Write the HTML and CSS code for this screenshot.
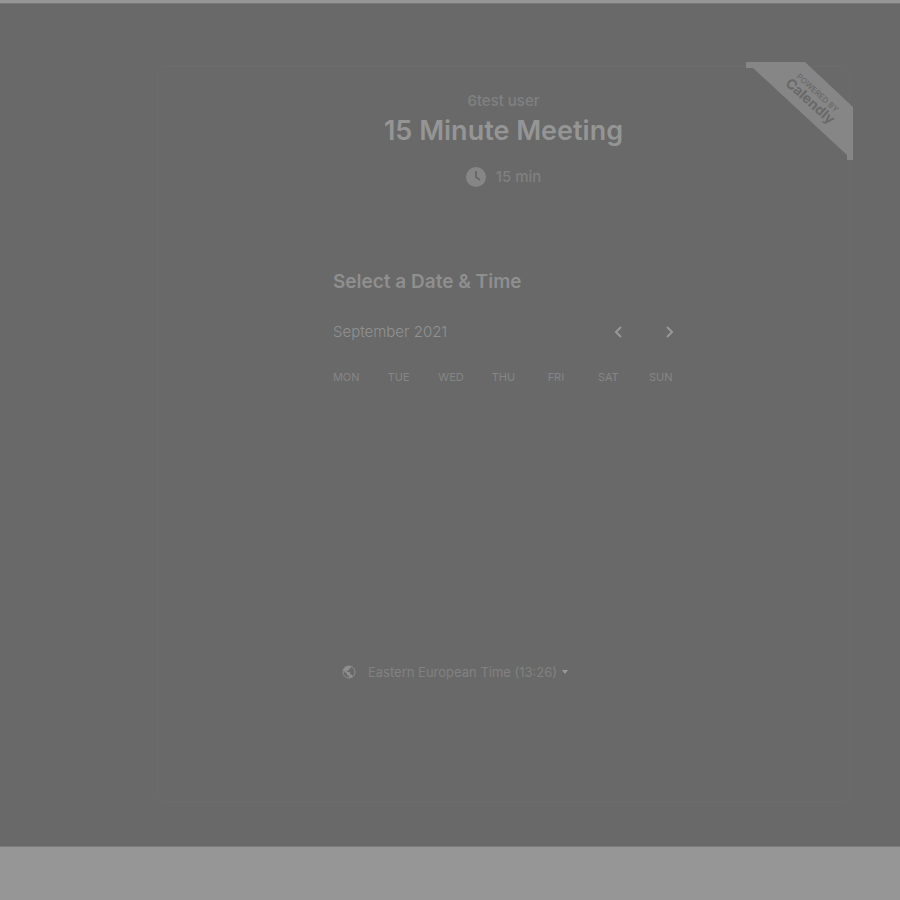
FILE: index.html
```html
<!DOCTYPE html>
<html lang="en">
<head>
<meta charset="utf-8">
<title>15 Minute Meeting</title>
<link rel="stylesheet" href="styles.css">
</head>
<body>
<main class="stage">
  <section class="card">
    <a class="ribbon" href="#">
      <svg class="ribbon-shape" viewBox="0 0 107 98" aria-hidden="true"><path d="M0 0H59L107 45V98H101V93L7 6H0Z"/></svg>
      <span class="ribbon-text"><small>POWERED BY</small><strong>Calendly</strong></span>
    </a>
    <header class="intro">
      <p class="host">6test user</p>
      <h1>15 Minute Meeting</h1>
      <p class="duration">
        <svg class="clock" viewBox="0 0 20 20" aria-hidden="true"><circle cx="10" cy="10" r="10"/><path d="M10 4V10L14 13"/></svg>
        <span>15 min</span>
      </p>
    </header>
    <div class="picker">
      <h2>Select a Date &amp; Time</h2>
      <div class="month">
        <span class="month-name">September 2021</span>
        <button type="button" aria-label="Previous month"><svg viewBox="0 0 8 12"><path d="M7 1L2 6L7 11"/></svg></button>
        <button type="button" aria-label="Next month"><svg viewBox="0 0 8 12"><path d="M1 1L6 6L1 11"/></svg></button>
      </div>
      <table class="days">
        <thead><tr><th>MON</th><th>TUE</th><th>WED</th><th>THU</th><th>FRI</th><th>SAT</th><th>SUN</th></tr></thead>
      </table>
      <button class="zone" type="button">
        <svg class="globe" viewBox="0 0 14 14" aria-hidden="true"><circle cx="7" cy="7" r="6"/><path d="M1 6L2 3L5 1L9 1L9 3L7 4L7 5L5 6L5 7L8 7L8 9L10 10L11 12L7 13L7 11L5 10L5 9L2 6Z"/></svg>
        <span>Eastern European Time (13:26)</span>
        <svg class="caret" viewBox="0 0 6 4" aria-hidden="true"><path d="M0 0H6L3 4Z"/></svg>
      </button>
    </div>
  </section>
</main>
</body>
</html>
```
FILE: styles.css
```css
* { box-sizing: border-box; }

body {
  margin: 0;
  min-height: 100vh;
  background: #969696;
  font-family: Inter, "Liberation Sans", sans-serif;
  color: #868686;
}

.stage {
  margin-top: 3px;
  padding: 62px 50px 44px 157px;
  background: #696969;
  border-top: 1px solid #777;
  border-bottom: 1px solid #7c7c7c;
}

h1, h2, p { margin: 0; }

.card {
  position: relative;
  min-height: 736px;
  padding-top: 24px;
  border: 1px solid #6c6c6c;
  border-radius: 8px;
}

.ribbon {
  position: absolute;
  top: -5px;
  right: -4px;
  width: 107px;
  height: 98px;
  color: #696969;
  text-decoration: none;
}

.ribbon-shape {
  display: block;
  width: 100%;
  fill: #868686;
}

.ribbon-text {
  position: absolute;
  top: 25px;
  left: 31px;
  width: 72px;
  text-align: center;
  transform: rotate(42deg);
}

.ribbon-text small, .ribbon-text strong { display: block; }

.ribbon-text small {
  font-size: 8px;
  font-weight: 500;
  line-height: 8px;
}

.ribbon-text strong {
  font-size: 14px;
  font-weight: 700;
  line-height: 14px;
}

.intro { text-align: center; }

.host {
  font-size: 15px;
  font-weight: 500;
  line-height: 20px;
  color: #818181;
}

h1 {
  font-size: 27px;
  font-weight: 600;
  line-height: 40px;
  color: #959595;
}

.duration {
  display: flex;
  justify-content: center;
  align-items: center;
  gap: 10px;
  margin-top: 16px;
  font-size: 15px;
  font-weight: 500;
  line-height: 20px;
  color: #808080;
}

.clock {
  width: 20px;
  height: 20px;
  fill: #868686;
}

.clock path {
  fill: none;
  stroke: #696969;
  stroke-width: 2;
}

.picker {
  max-width: 367px;
  margin: 83px auto 0;
}

h2 {
  padding-left: 13px;
  font-size: 19px;
  font-weight: 600;
  line-height: 24px;
  color: #8f8f8f;
}

button {
  padding: 0;
  border: 0;
  background: none;
  font: inherit;
  color: inherit;
}

.month {
  display: flex;
  align-items: center;
  gap: 28px;
  margin-top: 26px;
  padding: 0 5px 0 13px;
}

.month-name {
  flex: 1;
  font-size: 15px;
  font-weight: 300;
  line-height: 24px;
  color: #919191;
}

.month button {
  display: grid;
  place-items: center;
  width: 24px;
  height: 24px;
}

.month svg {
  width: 8px;
  height: 12px;
  fill: none;
  stroke: #989898;
  stroke-width: 2;
}

.days {
  width: 100%;
  margin-top: 23px;
  table-layout: fixed;
  border-collapse: collapse;
}

.days th {
  padding: 0;
  font-size: 11px;
  font-weight: 400;
  line-height: 20px;
}

.zone {
  display: flex;
  align-items: center;
  margin: 275px 0 0 22px;
  font-size: 13px;
  line-height: 20px;
  color: #828282;
}

.globe {
  width: 14px;
  height: 14px;
  margin-right: 12px;
  fill: #8e8e8e;
}

.globe circle {
  fill: none;
  stroke: #8e8e8e;
}

.caret {
  width: 6px;
  height: 4px;
  margin-left: 5px;
  fill: #999;
}
```
